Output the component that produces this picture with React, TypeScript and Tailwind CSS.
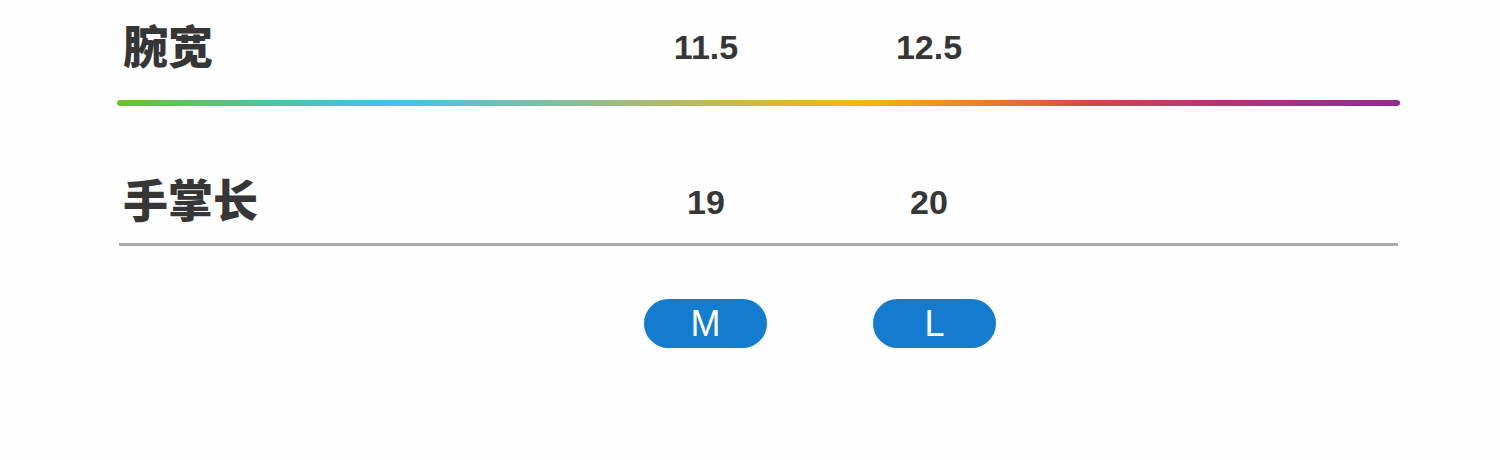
export default function App() {
  const cn = { fontFamily: '"Noto Sans CJK SC", "Noto Sans", sans-serif' };
  const num = { fontFamily: '"Liberation Sans", Arial, sans-serif' };

  return (
    <div className="w-[1500px] h-[460px] bg-[#fefefe] overflow-hidden">
      <div className="ml-[117px] w-[1283px]">
        {/* 腕宽 */}
        <div className="flex items-center h-[90px]">
          <div className="w-[527px] pl-[6px] text-[45px] font-black text-[#363636] leading-none -mt-[2px]" style={cn}>
            腕宽
          </div>
          <div className="w-[124px] text-center text-[34px] font-bold text-[#363636] leading-none pt-[4px]" style={num}>
            11.5
          </div>
          <div className="ml-[99px] w-[124px] text-center text-[34px] font-bold text-[#363636] leading-none pt-[4px]" style={num}>
            12.5
          </div>
        </div>
        <div className="mt-[10px] h-[6px] rounded-full bg-[linear-gradient(to_right,#6cc42c_0%,#4fc3a0_12%,#40c3ef_21%,#b0bb6a_43%,#f6b70c_58%,#e2633a_72%,#d3434a_76%,#b03578_87%,#922b94_100%)]" />

        {/* 手掌长 */}
        <div className="flex items-center h-[86px] mt-[51px]">
          <div className="w-[527px] pl-[6px] text-[45px] font-black text-[#363636] leading-none -mt-[3px]" style={cn}>
            手掌长
          </div>
          <div className="w-[124px] text-center text-[34px] font-bold text-[#363636] leading-none pt-[4px]" style={num}>
            19
          </div>
          <div className="ml-[99px] w-[124px] text-center text-[34px] font-bold text-[#363636] leading-none pt-[4px]" style={num}>
            20
          </div>
        </div>
        <div className="h-[3px] w-[1279px] ml-[2px] bg-[#a9a9a9]" />

        {/* 尺码 */}
        <div className="flex mt-[53px]">
          <div className="w-[527px]" />
          <div className="w-[123px] h-[49px] rounded-full bg-[#137ccf] text-white flex items-center justify-center text-[36px] leading-none" style={num}>
            M
          </div>
          <div className="ml-[106px] w-[123px] h-[49px] rounded-full bg-[#137ccf] text-white flex items-center justify-center text-[36px] leading-none" style={num}>
            L
          </div>
        </div>
      </div>
    </div>
  );
}
